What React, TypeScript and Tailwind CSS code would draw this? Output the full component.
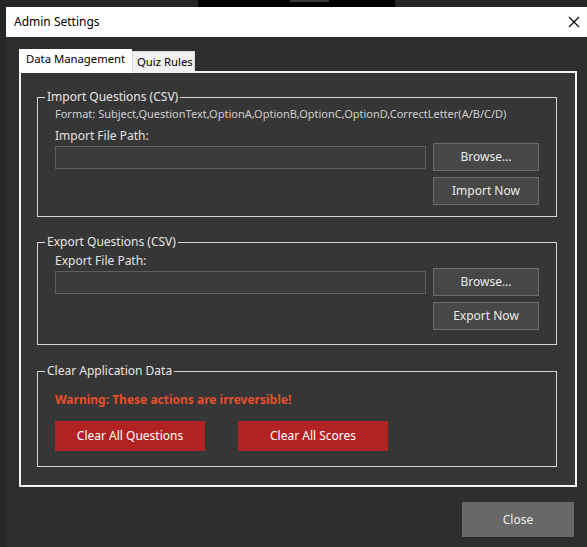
import React from 'react';

const font = { fontFamily: '"Segoe UI", "Noto Sans", sans-serif' };

const GrayButton = ({ label }: { label: string }) => (
  <button className="w-[106px] h-[28px] bg-[#474747] border border-[#6b6b6b] text-[12px] text-[#ececec]">
    {label}
  </button>
);

const Group: React.FC<{ title: string; className?: string; children: React.ReactNode }> = ({ title, className, children }) => (
  <fieldset className={`border border-[#d6d6d6] ${className ?? ''}`}>
    <legend className="ml-[7px] px-[2px] text-[12px] leading-[16px] text-[#e6e6e6]">{title}</legend>
    {children}
  </fieldset>
);

// labelTop / buttonTop are margins so the buttons sit 3px above the input
const PathRow = ({ label, action, labelTop, buttonTop }: { label: string; action: string; labelTop: string; buttonTop: string }) => (
  <div className="flex items-start pl-[17px]">
    <div className={`flex flex-col ${labelTop}`}>
      <span className="text-[12px] leading-[16px] text-[#e2e2e2]">{label}</span>
      <div className="mt-[2px] w-[371px] h-[23px] bg-[#3b3b3b] border border-[#5f5f5f]" />
    </div>
    <div className={`ml-[7px] flex flex-col gap-[6px] ${buttonTop}`}>
      <GrayButton label="Browse..." />
      <GrayButton label={action} />
    </div>
  </div>
);

const App: React.FC = () => {
  return (
    <div className="w-[587px] h-[547px] bg-[#262626] overflow-hidden flex flex-col" style={font}>
      {/* desktop strip behind the window */}
      <div className="h-[7px] flex">
        <div className="ml-[198px] w-[197px] h-full bg-black flex">
          <div className="ml-[92px] w-[39px] h-[2px] bg-[#3a3a3a]" />
        </div>
      </div>

      <div className="ml-[6px] flex-1 flex flex-col">
        {/* title bar */}
        <div className="h-[30px] bg-white flex items-center justify-between pl-[8px] pr-[7px]">
          <span className="text-[12px] text-black">Admin Settings</span>
          <svg width="12" height="12" viewBox="0 0 12 12" className="text-black">
            <path d="M1 1 L11 11 M11 1 L1 11" stroke="currentColor" strokeWidth="1.1" />
          </svg>
        </div>

        {/* body */}
        <div className="flex-1 bg-[#2e2e2e] pl-[13px] pt-[12px] flex flex-col">
          <div className="flex items-end h-[22px] relative z-10">
            <div className="w-[113px] h-[24px] -mb-[2px] bg-white pl-[7px] pt-[2px] text-[11.3px] text-black whitespace-nowrap">
              Data Management
            </div>
            <div className="w-[63px] h-[20px] bg-[#f0f0f0] border border-[#d9d9d9] border-b-0 pl-[4px] pt-[1px] text-[11.3px] leading-[18px] text-black whitespace-nowrap">
              Quiz Rules
            </div>
          </div>

          <div className="w-[558px] h-[416px] border-2 border-[#f2f2f2] bg-[#363636] pl-[16px] pr-[18px]">
            <Group title="Import Questions (CSV)" className="mt-[16px] h-[128px]">
              <div className="pl-[17px] mt-[1px] text-[11px] leading-[16px] text-[#cfcfcf]">
                Format: Subject,QuestionText,OptionA,OptionB,OptionC,OptionD,CorrectLetter(A/B/C/D)
              </div>
              <PathRow label="Import File Path:" action="Import Now" labelTop="mt-[6px]" buttonTop="mt-[21px]" />
            </Group>

            <Group title="Export Questions (CSV)" className="mt-[17px] h-[111px]">
              <PathRow label="Export File Path:" action="Export Now" labelTop="mt-[3px]" buttonTop="mt-[18px]" />
            </Group>

            <Group title="Clear Application Data" className="mt-[18px] h-[104px]">
              <div className="pl-[17px] mt-[12px] text-[12px] leading-[18px] font-bold text-[#e4502a]">
                Warning: These actions are irreversible!
              </div>
              <div className="pl-[17px] mt-[12px] flex gap-[33px]">
                <button className="w-[150px] h-[30px] bg-[#b22222] text-[12px] text-white">Clear All Questions</button>
                <button className="w-[150px] h-[30px] bg-[#b22222] text-[12px] text-white">Clear All Scores</button>
              </div>
            </Group>
          </div>

          <div className="flex justify-end pr-[13px] mt-[15px]">
            <button className="w-[112px] h-[35px] bg-[#686868] text-[12px] text-[#ececec]">Close</button>
          </div>
        </div>
      </div>
    </div>
  );
};

export default App;
